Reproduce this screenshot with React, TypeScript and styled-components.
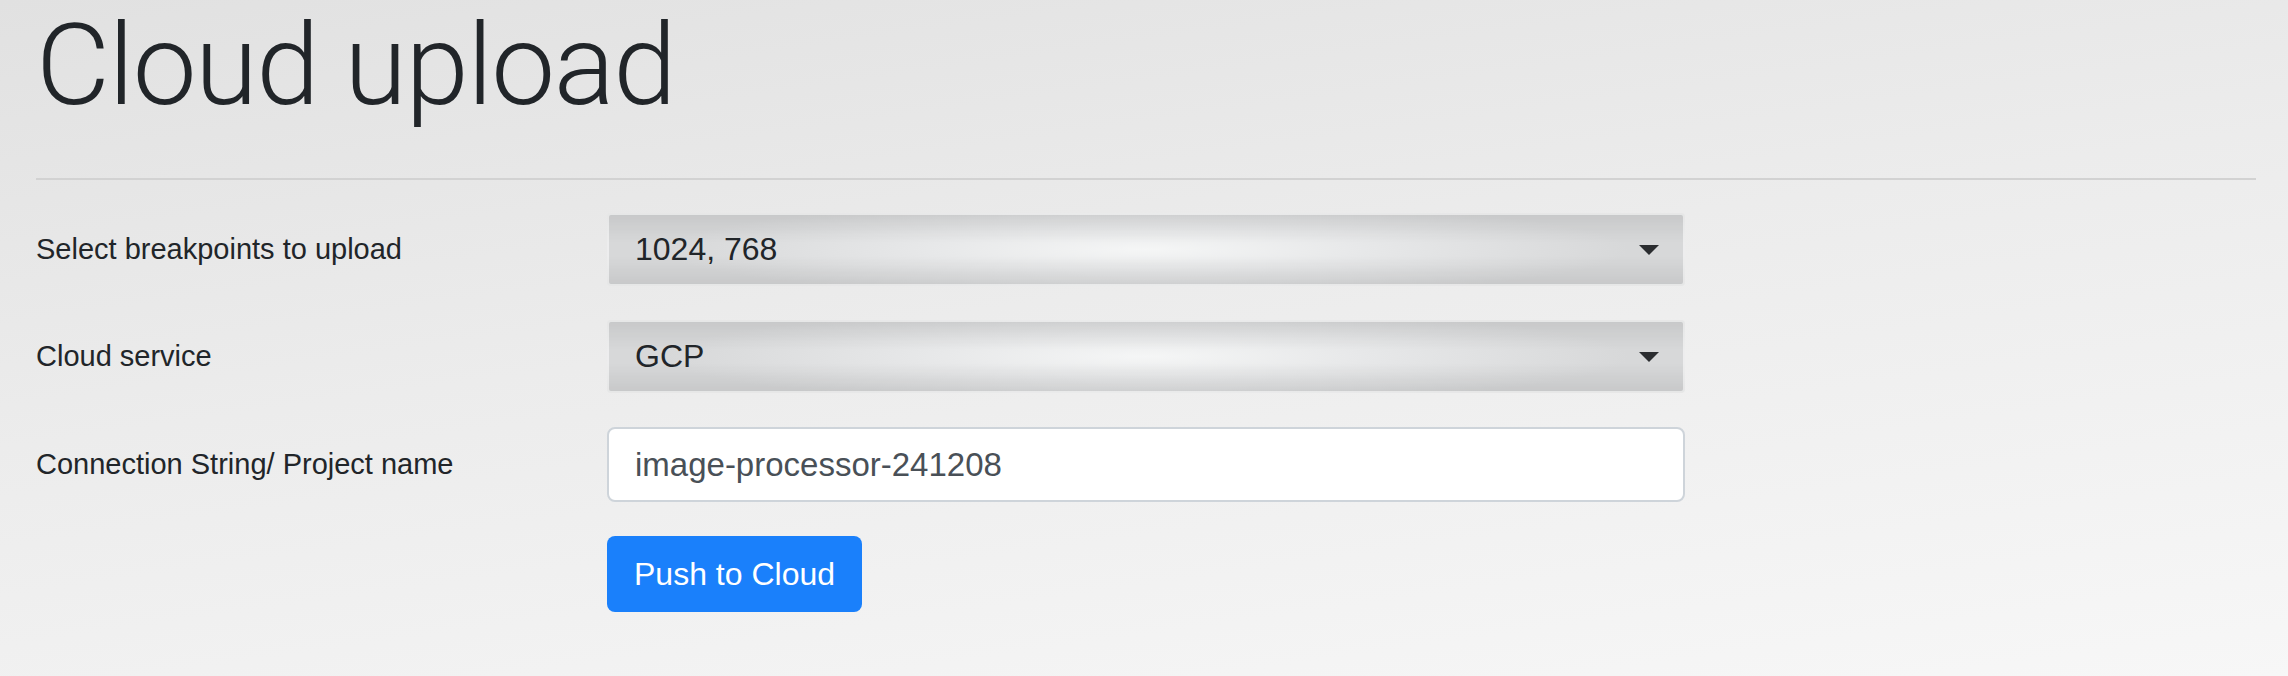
import React from 'react';
import styled, {createGlobalStyle} from 'styled-components';

const GlobalStyle = createGlobalStyle`
    html, body {
        margin: 0;
        padding: 0;
    }

    body {
        min-height: 676px;
        background: linear-gradient(172deg, #e1e1e1 0%, #ececec 45%, #f7f7f7 100%);
        font-family: "Liberation Sans", Arial, sans-serif;
        color: #212529;
    }
`;

const Page = styled.div`
    padding: 8px 32px 40px 36px;
`;

const Title = styled.h1`
    margin: 0;
    font-family: Roboto, "Liberation Sans", sans-serif;
    font-weight: 300;
    font-size: 114px;
    letter-spacing: -1.5px;
    line-height: 1;
    color: #212529;
    white-space: nowrap;
`;

const Divider = styled.hr`
    margin: 56px 0 0;
    border: 0;
    height: 2px;
    background: #d2d2d2;
`;

const Form = styled.form`
    display: grid;
    grid-template-columns: 571px 1078px;
    row-gap: 34px;
    align-items: center;
    margin-top: 33px;
`;

const Label = styled.label`
    font-size: 29px;
    color: #212529;
`;

const SelectBox = styled.div`
    display: flex;
    align-items: center;
    justify-content: space-between;
    box-sizing: border-box;
    height: 73px;
    padding: 0 24px 0 26px;
    border: 2px solid rgba(255, 255, 255, 0.55);
    border-radius: 4px;
    font-size: 32px;
    color: #212529;
    background:
        linear-gradient(to bottom, rgba(0, 0, 0, 0.07) 0%, rgba(0, 0, 0, 0) 40%, rgba(0, 0, 0, 0) 60%, rgba(0, 0, 0, 0.07) 100%),
        radial-gradient(ellipse 45% 70% at 50% 50%, #f5f6f6 0%, #e7e8e9 45%, #d7d8d9 100%);
`;

const Arrow = styled.svg`
    width: 20px;
    height: 10px;
    flex: none;
`;

const TextInput = styled.input`
    box-sizing: border-box;
    width: 100%;
    height: 75px;
    padding: 0 26px;
    border: 2px solid #ced4da;
    border-radius: 8px;
    background: #fff;
    font-family: "Liberation Sans", Arial, sans-serif;
    font-size: 33px;
    color: #495057;
    outline: none;
`;

const Button = styled.button`
    justify-self: start;
    height: 76px;
    padding: 0 27px;
    border: 0;
    border-radius: 8px;
    background: #1a80fb;
    color: #fff;
    font-family: "Liberation Sans", Arial, sans-serif;
    font-size: 32px;
    cursor: pointer;
`;

const Spacer = styled.div``;

const Select = ({value}: {value: string}) => (
    <SelectBox>
        <span>{value}</span>
        <Arrow viewBox='0 0 20 10'>
            <path d='M0 0 L20 0 L10 10 Z' fill='#2b2d30'/>
        </Arrow>
    </SelectBox>
);

const App = () => (
    <>
        <GlobalStyle/>
        <Page>
            <Title>Cloud upload</Title>
            <Divider/>
            <Form onSubmit={(e) => e.preventDefault()}>
                <Label>Select breakpoints to upload</Label>
                <Select value='1024, 768'/>

                <Label>Cloud service</Label>
                <Select value='GCP'/>

                <Label>Connection String/ Project name</Label>
                <TextInput
                    type='text'
                    defaultValue='image-processor-241208'
                />

                <Spacer/>
                <Button type='submit'>Push to Cloud</Button>
            </Form>
        </Page>
    </>
);

export default App;
